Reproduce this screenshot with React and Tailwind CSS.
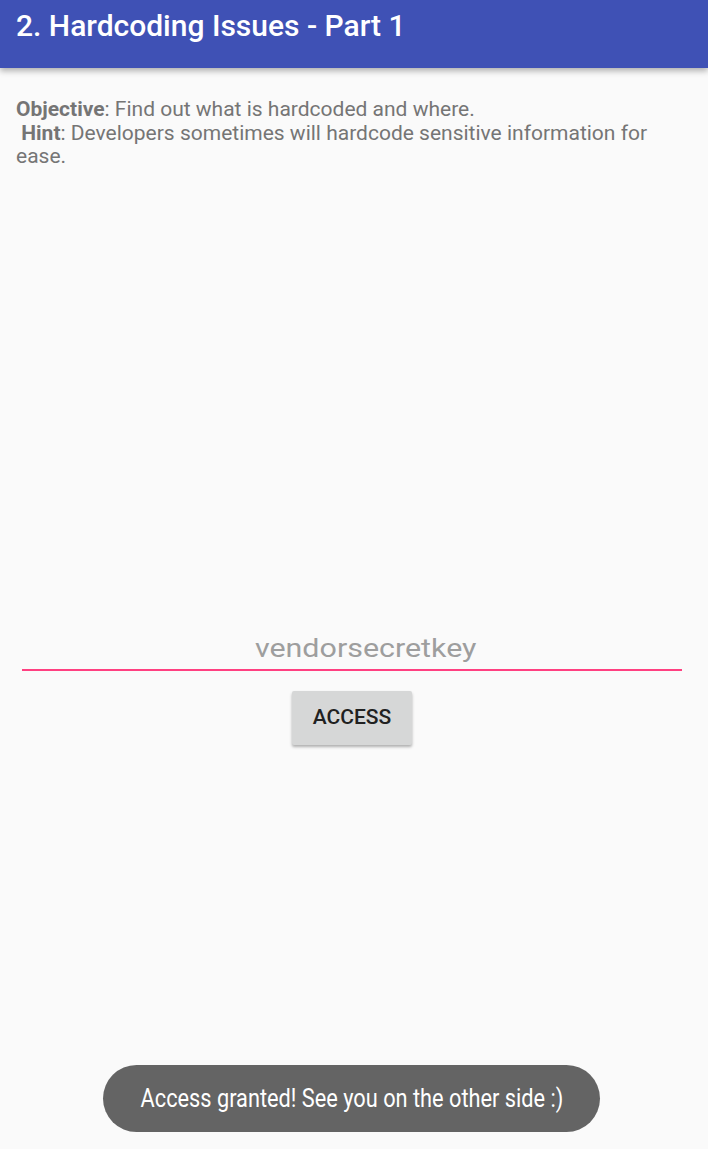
export default function App() {
  return (
    <div className="relative h-[1149px] w-[708px] overflow-hidden bg-[#fafafa] font-['Roboto',sans-serif]">
      {/* App bar */}
      <div className="relative z-10 h-[68px] bg-[#3f51b5] pl-4 pt-[9px] shadow-[0_3px_6px_rgba(0,0,0,0.3)]">
        <h1 className="text-[30px] font-medium leading-[34px] text-white">2. Hardcoding Issues - Part 1</h1>
      </div>

      {/* Description */}
      <div className="pl-4 pr-[40px] pt-[30px] text-[21px] leading-[23.5px] text-[#757575]">
        <p>
          <span className="font-bold">Objective</span>: Find out what is hardcoded and where.
          <br />
          &nbsp;<span className="font-bold">Hint</span>: Developers sometimes will hardcode sensitive information for ease.
        </p>
      </div>

      {/* Input + button */}
      <div className="mt-[462px] flex flex-col items-center pl-[22px] pr-[26px]">
        <div className="w-full border-b-2 border-[#ff4081] pb-[4px] pl-[28px] text-center text-[26px] leading-[34px] text-[#9e9e9e]">
          <span className="inline-block scale-x-[1.17]">vendorsecretkey</span>
        </div>
        <button className="mt-[20px] h-[54px] w-[120px] rounded-[2px] bg-[#d6d7d7] text-[21px] font-medium text-[#212121] shadow-[0_2px_3px_rgba(0,0,0,0.3)]">
          ACCESS
        </button>
      </div>

      {/* Toast */}
      <div className="absolute bottom-[17px] left-[103px] flex h-[67px] w-[497px] items-center justify-center rounded-full bg-[#646464] text-[25px] text-white">
        <span className="inline-block whitespace-nowrap scale-x-[0.87]">Access granted! See you on the other side :)</span>
      </div>
    </div>
  );
}
